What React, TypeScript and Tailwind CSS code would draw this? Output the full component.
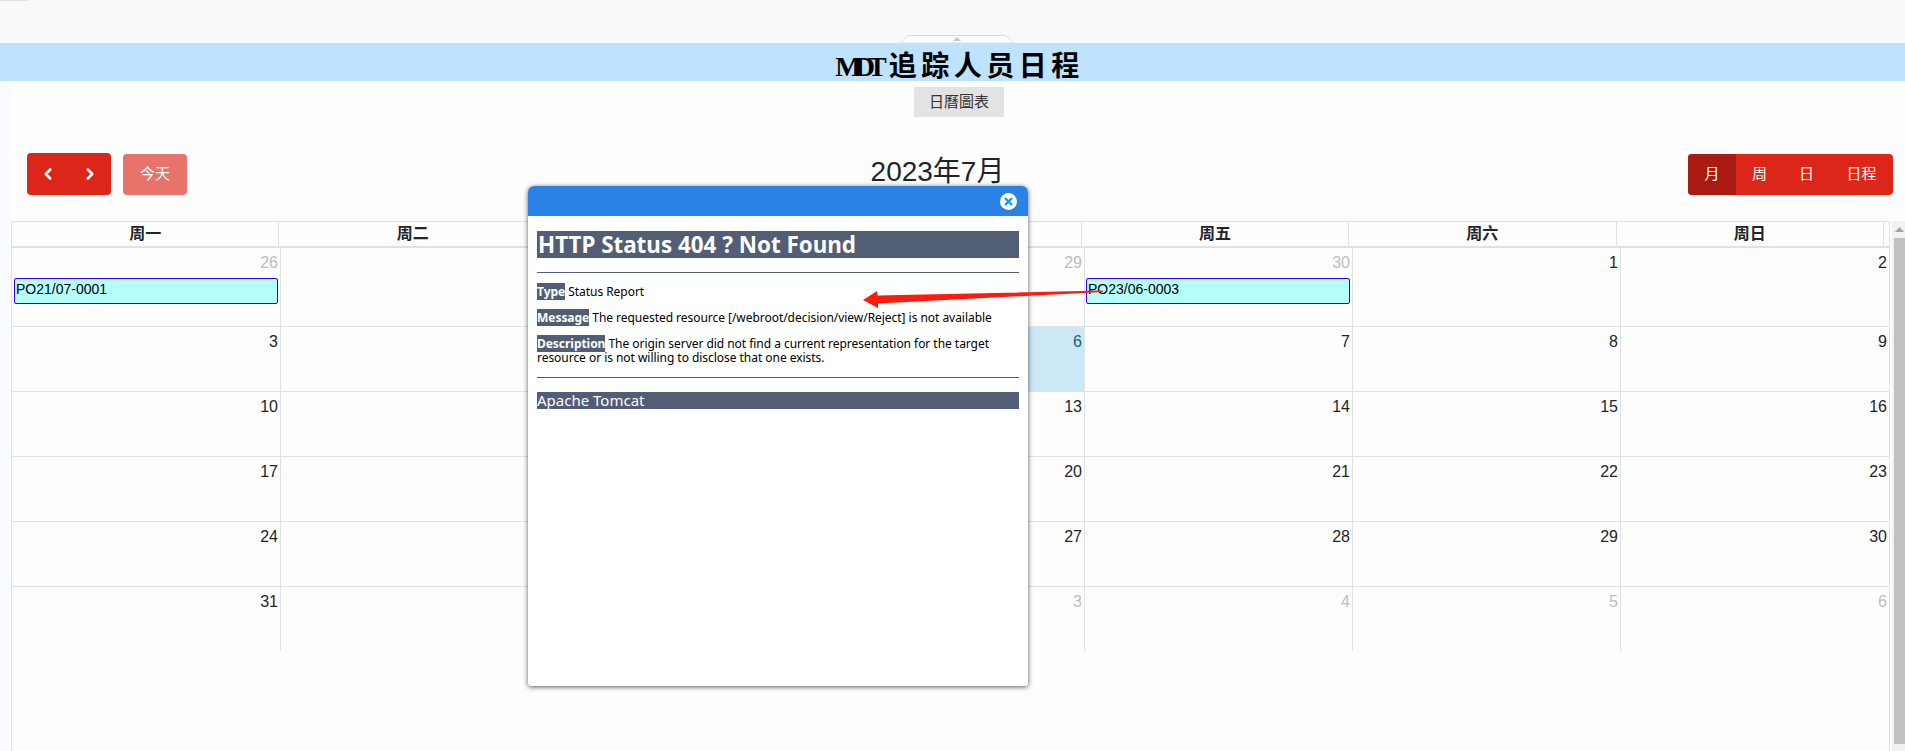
import { ChevronLeft, ChevronRight } from "lucide-react";

type Day = { n?: number; muted?: boolean; today?: boolean; event?: string };

// the two middle columns sit behind the dialog, nothing of them shows
const weekdays = ["周一", "周二", "", "", "周五", "周六", "周日"];
const hidden: Day = {};

const rows: { height: string; days: Day[] }[] = [
  {
    height: "h-[79px]",
    days: [
      { n: 26, muted: true, event: "PO21/07-0001" },
      hidden,
      hidden,
      { n: 29, muted: true },
      { n: 30, muted: true, event: "PO23/06-0003" },
      { n: 1 },
      { n: 2 },
    ],
  },
  {
    height: "h-[65px]",
    days: [{ n: 3 }, hidden, hidden, { n: 6, today: true }, { n: 7 }, { n: 8 }, { n: 9 }],
  },
  {
    height: "h-[65px]",
    days: [{ n: 10 }, hidden, hidden, { n: 13 }, { n: 14 }, { n: 15 }, { n: 16 }],
  },
  {
    height: "h-[65px]",
    days: [{ n: 17 }, hidden, hidden, { n: 20 }, { n: 21 }, { n: 22 }, { n: 23 }],
  },
  {
    height: "h-[65px]",
    days: [{ n: 24 }, hidden, hidden, { n: 27 }, { n: 28 }, { n: 29 }, { n: 30 }],
  },
  {
    height: "h-[64px]",
    days: [
      { n: 31 },
      hidden,
      hidden,
      { n: 3, muted: true },
      { n: 4, muted: true },
      { n: 5, muted: true },
      { n: 6, muted: true },
    ],
  },
];

function DayCell({ day }: { day: Day }) {
  return (
    <div className={`border-r border-[#dee2e6] pt-[3px] last:border-r-0 ${day.today ? "bg-[#cbe9f4]" : ""}`}>
      <div
        className={`h-6 pr-[2px] text-right text-[16px] leading-6 ${
          day.muted ? "text-[#bcbdbe]" : day.today ? "text-[#1d5f7a]" : "text-[#212529]"
        }`}
      >
        {day.n}
      </div>
      {day.event && (
        <div className="ml-[1px] mr-[2px] mt-[3px] h-[26px] rounded-[2px] border border-[#3300ee] bg-[#b5fffb] pl-px text-[14px] leading-5 text-black">
          {day.event}
        </div>
      )}
    </div>
  );
}

function ErrorModal() {
  return (
    <div className="absolute left-[528px] top-[186px] h-[500px] w-[500px] rounded-t-[6px] rounded-b-[3px] bg-white shadow-[0_1px_5px_rgba(0,0,0,0.65)]">
      <div className="flex h-[30px] items-center justify-end rounded-t-[6px] bg-[#2b82e6] pr-[11px]">
        <svg width="17" height="17" viewBox="0 0 17 17">
          <circle cx="8.5" cy="8.5" r="8.5" fill="#fff" />
          <path d="M5 5l7 7M12 5l-7 7" stroke="#1b9ae4" strokeWidth="2.4" fill="none" />
        </svg>
      </div>
      <div className="px-[9px] pt-[15px] font-['Noto_Sans',sans-serif] text-[12px] leading-[14px] tracking-[-0.04px] text-black">
        <h1 className="h-[27px] bg-[#525d76] pl-px text-[22.4px] font-bold leading-[27px] tracking-normal text-white">
          HTTP Status 404 ? Not Found
        </h1>
        <div className="mb-3 mt-[14px] h-px bg-[#525d76]" />
        <p className="mb-3">
          <b className="bg-[#525d76] font-bold text-white">Type</b> Status Report
        </p>
        <p className="mb-3">
          <b className="bg-[#525d76] font-bold text-white">Message</b> The requested resource
          [/webroot/decision/view/Reject] is not available
        </p>
        <p className="mb-3">
          <b className="bg-[#525d76] font-bold text-white">Description</b> The origin server did not find a current
          representation for the target resource or is not willing to disclose that one exists.
        </p>
        <div className="mb-[14px] h-px bg-[#525d76]" />
        <h3 className="h-[17px] bg-[#525d76] text-[15px] leading-[17px] tracking-normal text-white">Apache Tomcat</h3>
      </div>
    </div>
  );
}

export default function App() {
  return (
    <div className="relative flex h-[751px] w-[1905px] flex-col overflow-hidden bg-[#fdfdfe] font-['Liberation_Sans','Noto_Sans_CJK_SC',sans-serif] text-[#212529]">
      <div className="absolute left-0 top-0 h-px w-[28px] bg-[#e2e2e2]" />

      <div className="flex h-[43px] shrink-0 items-end justify-center bg-[#f8f9fa] pl-[9px]">
        <svg width="114" height="8" viewBox="0 0 114 8" className="block">
          <path d="M0.5 8L8 0.5H106L113.5 8Z" fill="#fdfdfd" stroke="#dcdcdc" />
          <path d="M53 6l4-4 4 4Z" fill="#c8c8c8" />
        </svg>
      </div>

      <div className="flex h-[38px] shrink-0 items-center justify-center bg-[#bfe2fe] pl-[14px]">
        <h1 className="mt-[9px] whitespace-nowrap font-['Liberation_Serif','Noto_Sans_CJK_SC',serif] text-[28px] font-bold leading-[38px] tracking-[4.5px] text-black">
          <span className="tracking-[-7px]">MDT</span>
          <span className="ml-[9px]">追踪人员日程</span>
        </h1>
      </div>

      <div className="flex min-h-0 flex-1">
        <div className="w-[11px] shrink-0 bg-[#f8fbff]" />
        <div className="flex min-w-0 flex-1 flex-col">
          <div className="flex justify-center pl-[2px] pt-[6px]">
            <button className="h-[30px] w-[90px] bg-[#e3e3e3] font-['Liberation_Sans','Noto_Sans_CJK_TC',sans-serif] text-[15px] text-[#333]">
              日曆圖表
            </button>
          </div>

          <div className="mt-[36px] flex h-[42px] items-end justify-between pl-[16px] pr-[12px]">
            <div className="flex items-end gap-3">
              <div className="flex h-[42px] w-[84px] rounded-[4px] bg-[#dc2619] text-white">
                <span className="flex w-[42px] items-center justify-center">
                  <ChevronLeft size={18} strokeWidth={3.5} />
                </span>
                <span className="flex w-[42px] items-center justify-center">
                  <ChevronRight size={18} strokeWidth={3.5} />
                </span>
              </div>
              <button className="h-[41px] w-[64px] rounded-[4px] bg-[#e8736a] text-[15px] text-white">今天</button>
            </div>

            <h2 className="self-start text-[28px] leading-[38px] text-[#212529]">2023年7月</h2>

            <div className="flex h-[41px] overflow-hidden rounded-[4px] bg-[#dc2619] text-[15px] text-white">
              <span className="flex w-[48px] items-center justify-center bg-[#a91b10]">月</span>
              <span className="flex w-[47px] items-center justify-center">周</span>
              <span className="flex w-[47px] items-center justify-center">日</span>
              <span className="flex w-[63px] items-center justify-center">日程</span>
            </div>
          </div>

          <div className="mt-[26px] flex min-h-0 flex-1">
            <div className="w-[1879px] shrink-0 border-x border-[#dee2e6]">
              <div className="h-[27px] border-y border-b-2 border-t-[#dee2e6] border-b-[#dee2e6] pr-[5px]">
                <div className="grid h-full grid-cols-7">
                  {weekdays.map((name, i) => (
                    <div
                      key={i}
                      className="border-r border-[#dee2e6] text-center text-[16px] font-bold leading-[24px] text-[#212529]"
                    >
                      {name}
                    </div>
                  ))}
                </div>
              </div>
              {rows.map((row, i) => (
                <div
                  key={i}
                  className={`grid grid-cols-7 pl-px ${row.height} ${i < rows.length - 1 ? "border-b border-[#dee2e6]" : ""}`}
                >
                  {row.days.map((day, j) => (
                    <DayCell key={j} day={day} />
                  ))}
                </div>
              ))}
            </div>

            <div className="ml-[2px] flex w-[13px] shrink-0 flex-col bg-[#f1f1f1]">
              <div className="flex h-[17px] items-center justify-center pl-[2px]">
                <svg width="9" height="5" viewBox="0 0 9 5">
                  <path d="M0 5l4.5-5L9 5Z" fill="#a3a3a3" />
                </svg>
              </div>
              <div className="ml-[2px] h-[506px] bg-[#c1c1c1]" />
            </div>
          </div>
        </div>
      </div>

      <ErrorModal />

      <svg width="260" height="30" viewBox="0 0 260 30" className="absolute left-[860px] top-[285px]">
        <path d="M3 15L17 6L17.5 10.5L243 5.5L243 7L18 18.5L18 23Z" fill="#ff1a10" />
      </svg>
    </div>
  );
}
